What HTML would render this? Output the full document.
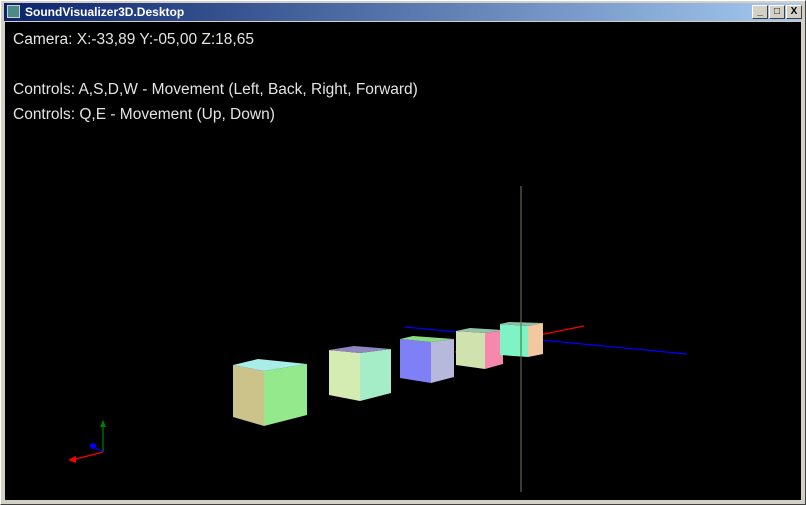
<!DOCTYPE html>
<html><head><style>
body{margin:0;width:806px;height:505px;background:#d4d0c8;overflow:hidden;position:relative;font-family:"Liberation Sans",sans-serif}
.frame{position:absolute;left:0;top:0;width:804px;height:503px;border:1px solid #fff;border-right-color:#404040;border-bottom-color:#404040}
.title{position:absolute;left:4px;top:3px;width:798px;height:18px;background:linear-gradient(90deg,#0a246a,#a6caf0)}
.title span{position:absolute;left:21px;top:2px;color:#fff;font-weight:bold;font-size:12px}
.ico{position:absolute;left:3px;top:2px;width:13px;height:13px;background:#4a8a8a;border:1px solid #ccc;box-sizing:border-box}
.btn{position:absolute;top:2px;width:16px;height:14px;box-sizing:border-box;background:#d4d0c8;border:1px solid #fff;border-right-color:#404040;border-bottom-color:#404040;font-size:10px;line-height:12px;text-align:center;color:#000;font-weight:bold}
.client{position:absolute;left:5px;top:22px;width:796px;height:478px;background:#000}
.t{position:absolute;left:13px;color:#e4e4e4;font-size:15.5px;white-space:nowrap}
svg{position:absolute;left:0;top:0}
</style></head><body>
<div class="frame"></div>
<div class="title"><div class="ico"></div><span>SoundVisualizer3D.Desktop</span>
<div class="btn" style="left:748px">_</div><div class="btn" style="left:765px">□</div><div class="btn" style="left:782px">X</div></div>
<div class="client"></div>
<div class="t" style="top:31px">Camera: X:-33,89 Y:-05,00 Z:18,65</div>
<div class="t" style="top:81px">Controls: A,S,D,W - Movement (Left, Back, Right, Forward)</div>
<div class="t" style="top:106px">Controls: Q,E - Movement (Up, Down)</div>
<svg width="806" height="505">
<line x1="521" y1="186" x2="521" y2="492" stroke="#6a7a6a" stroke-width="1"/>
<line x1="405" y1="327" x2="687" y2="354" stroke="#0000ff" stroke-width="1.2"/>
<line x1="455" y1="352" x2="584" y2="326" stroke="#ff0000" stroke-width="1.2"/>
<polygon points="233,365 264,371 264,426 233,417" fill="#cbc38a"/>
<polygon points="264,371 307,364 307,415 264,426" fill="#93e98b"/>
<polygon points="233,365 258,359 307,364 264,371" fill="#a8ede8"/>
<polygon points="329,350 360,353 360,401 329,395" fill="#d4ebb1"/>
<polygon points="360,353 391,349 391,393 360,401" fill="#a5edc6"/>
<polygon points="329,350 354,346 391,349 360,353" fill="#9087c0"/>
<polygon points="400,339 431,342 431,383 400,378" fill="#7f7ff6"/>
<polygon points="431,342 454,339 454,377 431,383" fill="#b6b8dc"/>
<polygon points="400,339 413,336 454,339 431,342" fill="#8cdc82"/>
<polygon points="456,331 485,333 485,369 456,365" fill="#d0e3ae"/>
<polygon points="485,333 503,330 503,364 485,369" fill="#f687ad"/>
<polygon points="456,331 470,328 503,330 485,333" fill="#92c2aa"/>
<polygon points="500,324 528,326 528,357 500,355" fill="#7ff2c6"/>
<polygon points="528,326 543,323 543,354 528,357" fill="#f2c8a0"/>
<polygon points="500,324 509,322 543,323 528,326" fill="#8fbfaa"/>
<line x1="521" y1="323" x2="521" y2="358" stroke="#2a7a2a"/>
<line x1="103" y1="452" x2="103" y2="424" stroke="#008000" stroke-width="1.2"/>
<polygon points="103,420 100,427 106,427" fill="#008000"/>
<line x1="103" y1="452" x2="72" y2="460" stroke="#ff0000" stroke-width="1.2"/>
<polygon points="68,460 76,456 76,463" fill="#ff0000"/>
<line x1="103" y1="452" x2="94" y2="447" stroke="#0000ff" stroke-width="1.2"/>
<circle cx="93" cy="446" r="3" fill="#0000ff"/>
</svg>
</body></html>
